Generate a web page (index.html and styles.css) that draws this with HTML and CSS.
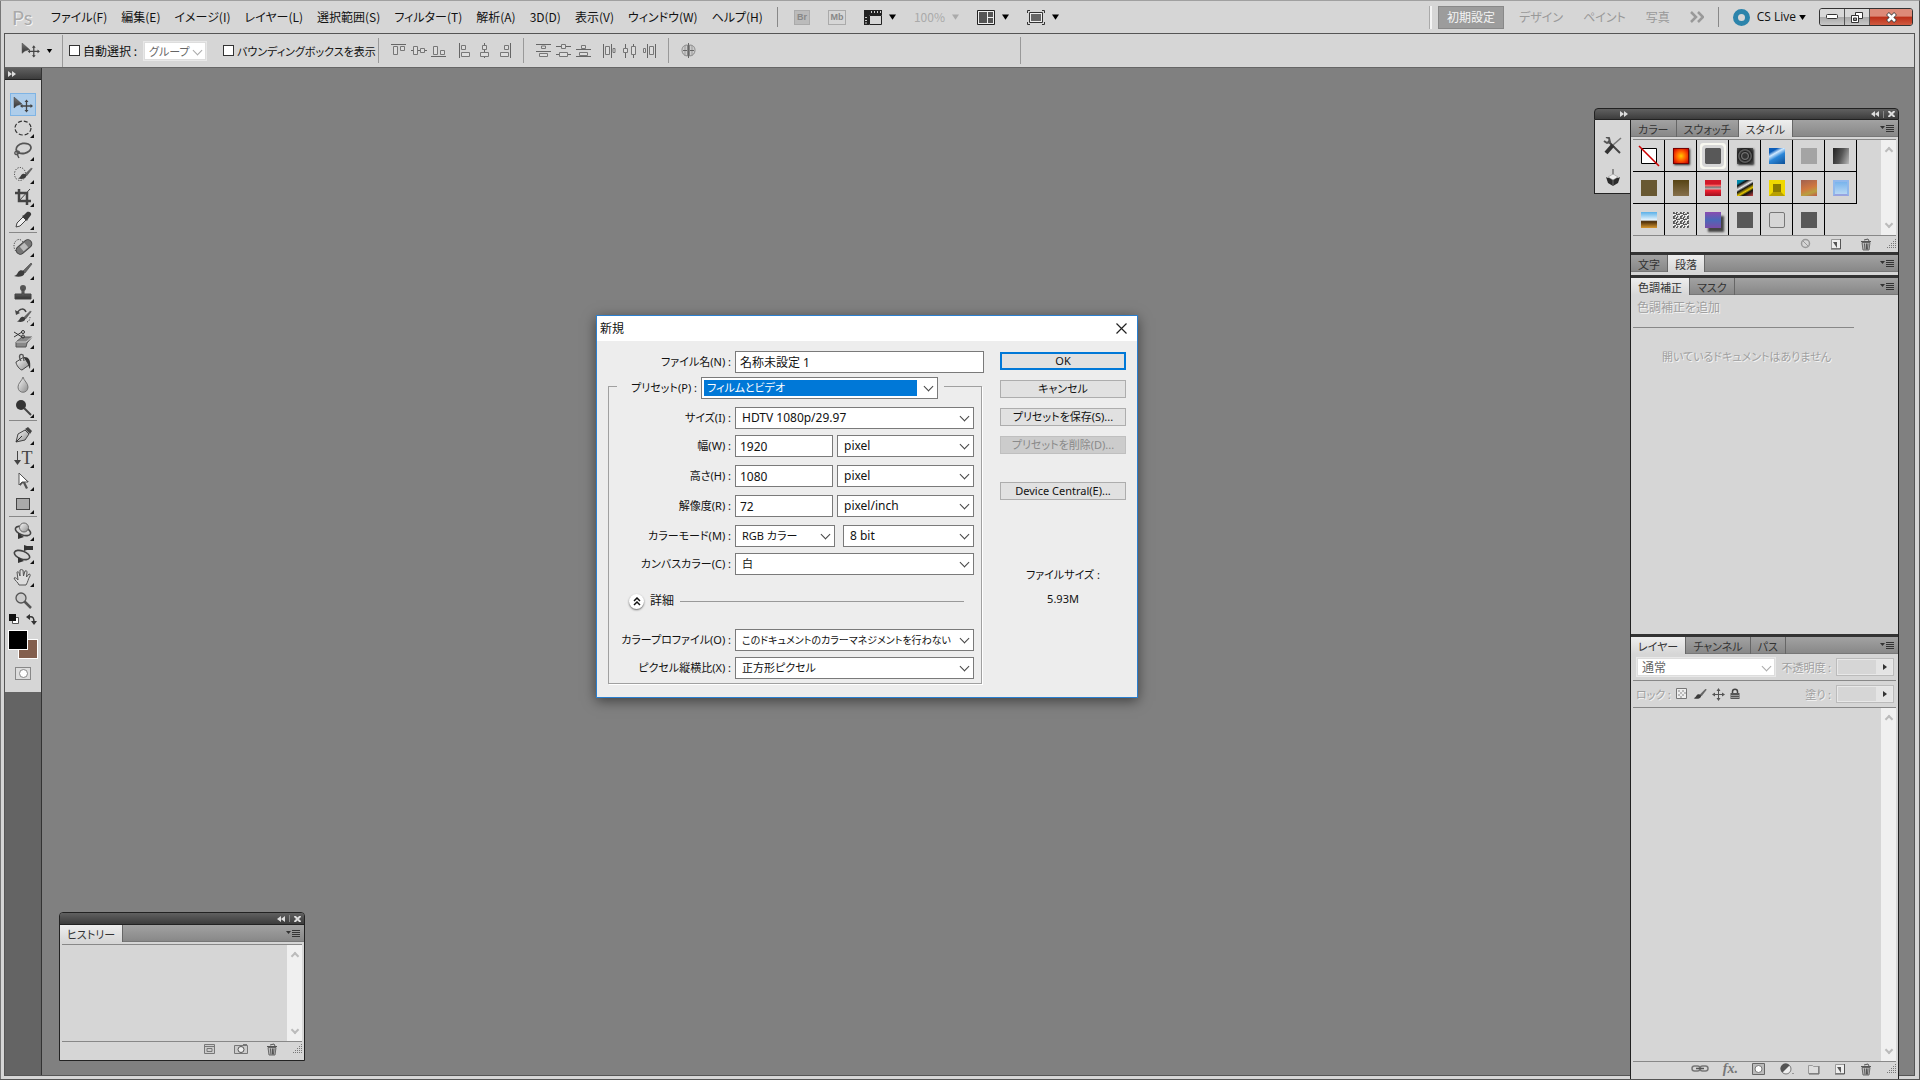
FILE: index.html
```html
<!DOCTYPE html>
<html lang="ja">
<head>
  <meta charset="UTF-8">
  <meta name="viewport" content="width=device-width, initial-scale=1.0">
  <title>Ps</title>
  <link rel="stylesheet" href="styles.css">
</head>
<body>

<!-- shared icons -->
<svg class="sprite" width="0" height="0">
  <defs>
    <linearGradient id="g-dark" x1="0" y1="0" x2="0" y2="1"><stop offset="0" stop-color="#777"/><stop offset="1" stop-color="#333"/></linearGradient>
    <linearGradient id="g-light" x1="0" y1="0" x2="1" y2="1"><stop offset="0" stop-color="#fafafa"/><stop offset="1" stop-color="#8c8c8c"/></linearGradient>
  </defs>
  <symbol id="i-menu" viewBox="0 0 14 9"><path d="M0 2h5L2.500 5z" fill="#333"/><path d="M6 1.500h8M6 3.500h8M6 5.500h8M6 7.500h8" stroke="#333"/></symbol>
  <symbol id="i-trash" viewBox="0 0 12 13"><path d="M2 4.500h8L9 12H3z" fill="#bbb" stroke="#666"/><path d="M4.500 5.500l.5 6M6.500 5.500v6M8 5.500l-.5 6M1 3.500h10M4 2l4-1 1 2" stroke="#555" fill="none"/></symbol>
  <symbol id="i-new" viewBox="0 0 12 12"><path d="M1.500 1.500h9v9h-9z" fill="#eee" stroke="#999"/><path d="M10.500 1v10H1" stroke="#555" fill="none"/><path d="M3 4h4v6z" fill="#555"/></symbol>
  <symbol id="i-grip" viewBox="0 0 10 10"><path d="M9.500 0v10M7.500 2v8M5.500 4v6M3.500 6v4M1.500 8v2" stroke="#777" stroke-dasharray="1 1"/></symbol>
  <symbol id="i-move" viewBox="0 0 20 16"><path d="M1 0v11l3-2.500L9 7z" fill="url(#g-dark)" stroke="#444" stroke-width=".5"/><path d="M13.500 4v10M8.500 9h10" stroke="#444" stroke-width="1.300"/><path d="M13.500 2.500l2 2.500h-4zM13.500 15.500l2-2.500h-4zM7 9l2.500-2v4zM20 9l-2.500-2v4z" fill="#444"/></symbol>
  <symbol id="i-brush" viewBox="0 0 20 16"><path d="M10 9l8-8 1 1-7 9z" fill="#666" stroke="#444" stroke-width=".6"/><path d="M1 14c4-1 3-4 6-5.500 2-.8 5 .5 4.500 3C10.500 15 5 15.500 1 14z" fill="#3c3c3c"/></symbol>
  <symbol id="i-down" viewBox="0 0 8 6"><path d="M0 0h8L4 6z"/></symbol>
  <symbol id="i-back" viewBox="0 0 8 6"><path d="M4 0v6L0 3zM8 0v6L4 3z" fill="#ddd"/></symbol>
  <symbol id="i-x" viewBox="0 0 7 6"><path d="M.5 0l6 6M6.500 0l-6 6" stroke="#ddd" stroke-width="2"/></symbol>
</svg>

<div class="app">
  <header class="menubar">
    <span class="logo">Ps</span>
    <nav class="menus">
      <button>ファイル(F)</button>
      <button>編集(E)</button>
      <button>イメージ(I)</button>
      <button>レイヤー(L)</button>
      <button>選択範囲(S)</button>
      <button>フィルター(T)</button>
      <button>解析(A)</button>
      <button>3D(D)</button>
      <button>表示(V)</button>
      <button>ウィンドウ(W)</button>
      <button>ヘルプ(H)</button>
    </nav>
    <div class="appbar">
      <button class="badge">Br</button>
      <button class="badge folder">Mb</button>
      <button class="drop">
        <svg width="18" height="15"><path d="M0 0h18v5H5v10H0z" fill="#222"/><path d="M5.500 5.500h12v9h-12z" fill="#d6d6d6" stroke="#222"/><path d="M7.500 1v2M10.500 1v2M13.500 1v2M16.500 1v2M1 7.500h2M1 10.500h2M1 13h2" stroke="#ccc"/></svg>
        <svg width="7" height="6"><use href="#i-down"/></svg>
      </button>
      <button class="drop off">100% <svg width="7" height="6"><use href="#i-down"/></svg></button>
      <button class="drop">
        <svg width="18" height="15"><path d="M.5.5h17v14H.5z" fill="#eee" stroke="#222"/><path d="M2 2h8v11H2zM11 2h5v5h-5zM11 8h5v5h-5z" fill="#555"/></svg>
        <svg width="7" height="6"><use href="#i-down"/></svg>
      </button>
      <button class="drop">
        <svg width="18" height="15"><path d="M.5 3V.5H3M15 .5h2.500V3M17.500 12v2.500H15M3 14.500H.5V12" fill="none" stroke="#333"/><path d="M2.500 2.500h13v10h-13z" fill="#eee" stroke="#333"/><path d="M4 4h10v7H4z" fill="#666"/></svg>
        <svg width="7" height="6"><use href="#i-down"/></svg>
      </button>
    </div>
    <div class="workspaces">
      <button class="current">初期設定</button>
      <button>デザイン</button>
      <button>ペイント</button>
      <button>写真</button>
      <button aria-label="その他"><svg width="14" height="12"><path d="M1 1l5 5-5 5M8 1l5 5-5 5" fill="none" stroke="#999" stroke-width="2.500"/></svg></button>
    </div>
    <button class="cslive"><i class="ring"></i>CS Live<svg width="7" height="5"><use href="#i-down"/></svg></button>
    <div class="winbtns">
      <button aria-label="最小化"><svg width="12" height="6"><rect x=".5" y=".5" width="11" height="4" rx="1" fill="#fff" stroke="#333"/></svg></button>
      <button aria-label="元に戻す"><svg width="12" height="11"><path d="M4.500.5h7v6h-7z" fill="#fff" stroke="#333"/><path d="M.5 3.500h7v7h-7z" fill="#fff" stroke="#333"/><path d="M2.500 6h3v2.500h-3z" fill="#999" stroke="#333"/></svg></button>
      <button class="close" aria-label="閉じる"><svg width="13" height="11"><path d="M2.500 1.500l8 8M10.500 1.500l-8 8" stroke="#444" stroke-width="4"/><path d="M3 2l7 7M10 2L3 9" stroke="#fff" stroke-width="2.500"/></svg></button>
    </div>
  </header>

  <div class="frame">
    <div class="options">
      <i class="vgrip"></i>
      <button class="tool-pick" aria-label="移動ツール"><svg width="19" height="15"><use href="#i-move"/></svg><svg width="7" height="4"><use href="#i-down"/></svg></button>
      <label class="check first"><input type="checkbox">自動選択 :</label>
      <span class="select faded group"><select aria-label="自動選択"><option>グループ</option></select></span>
      <label class="check bounds"><input type="checkbox">バウンディングボックスを表示</label>
      <div class="aligns ruled">
        <svg width="16" height="16"><path d="M0 1.500h15" stroke="#666"/><path d="M2.500 3.500h4v8h-4zM9.500 3.500h4v4h-4z" fill="#ddd" stroke="#777"/></svg>
        <svg width="16" height="16"><path d="M0 7.500h16" stroke="#666"/><path d="M2.500 3.500h4v8h-4zM9.500 5.500h4v4h-4z" fill="#ddd" stroke="#777"/></svg>
        <svg width="16" height="16"><path d="M0 13.500h15" stroke="#666"/><path d="M2.500 3.500h4v8h-4zM9.500 7.500h4v4h-4z" fill="#ddd" stroke="#777"/></svg>
      </div>
      <div class="aligns">
        <svg width="16" height="16"><path d="M2.500 0v15" stroke="#666"/><path d="M4.500 2.500h4v4h-4zM4.500 9.500h8v4h-8z" fill="#ddd" stroke="#777"/></svg>
        <svg width="16" height="16"><path d="M7.500 0v15" stroke="#666"/><path d="M5.500 2.500h4v4h-4zM3.500 9.500h8v4h-8z" fill="#ddd" stroke="#777"/></svg>
        <svg width="16" height="16"><path d="M13.500 0v15" stroke="#666"/><path d="M7.500 2.500h4v4h-4zM3.500 9.500h8v4h-8z" fill="#ddd" stroke="#777"/></svg>
      </div>
      <div class="aligns ruled">
        <svg width="16" height="16"><path d="M0 1.500h15M0 8.500h15" stroke="#666"/><path d="M5.500 3h4v2.500h-4zM3.500 10.500h8v3h-8z" fill="#ddd" stroke="#777"/></svg>
        <svg width="16" height="16"><path d="M0 3.500h15M0 11.500h15" stroke="#666"/><path d="M5.500 1.500h4v4h-4zM3.500 9.500h8v4h-8z" fill="#ddd" stroke="#777"/></svg>
        <svg width="16" height="16"><path d="M0 6.500h15M0 13.500h15" stroke="#666"/><path d="M5.500 2.500h4v3h-4zM3.500 9.500h8v3h-8z" fill="#ddd" stroke="#777"/></svg>
      </div>
      <div class="aligns">
        <svg width="16" height="16"><path d="M1.500 1v14M9.500 1v14" stroke="#666"/><path d="M3.500 3.500h4v8h-4zM11 5.500h2v4h-2z" fill="#ddd" stroke="#777"/></svg>
        <svg width="16" height="16"><path d="M3.500 1v14M11.500 1v14" stroke="#666"/><path d="M1.500 5.500h4v4h-4zM9.500 3.500h4v8h-4z" fill="#ddd" stroke="#777"/></svg>
        <svg width="16" height="16"><path d="M5.500 1v14M13.500 1v14" stroke="#666"/><path d="M1.500 5.500h2v4h-2zM7.500 3.500h4v8h-4z" fill="#ddd" stroke="#777"/></svg>
      </div>
      <div class="aligns ruled">
        <svg width="16" height="16"><path d="M6.500 2C2 2 1 5 1 7.500S3 13 6.500 13zM8.500 2C13 2 14 5 14 7.500S12 13 8.500 13z" fill="#ccc" stroke="#888"/><path d="M4 2v11M11 2v11" stroke="#999"/><path d="M7.500 0v15M2 7.500h4M9 7.500h4" stroke="#666"/></svg>
      </div>
      <i class="rest"></i>
    </div>

    <div class="stage">
      <aside class="tools">
        <div class="bar"><svg width="8" height="6"><path d="M0 0l4 3-4 3zM4 0l4 3-4 3z" fill="#ddd"/></svg></div>
        <div class="toolbox">
          <i class="hgrip"></i>
          <button class="tool on" aria-label="移動"><svg width="20" height="16"><use href="#i-move"/></svg></button>
          <button class="tool" aria-label="楕円形選択"><svg width="20" height="18"><ellipse cx="10" cy="9" rx="8" ry="7" fill="none" stroke="#333" stroke-width="1.200" stroke-dasharray="4 2"/></svg></button>
          <button class="tool" aria-label="なげなわ"><svg width="20" height="18"><ellipse cx="10.500" cy="6.500" rx="7.500" ry="5" transform="rotate(-10 10 6)" fill="none" stroke="#555" stroke-width="1.800"/><path d="M4 9c-4 1-2 5 1 3s0-4-1-2c0 3 1 4 2 6" fill="none" stroke="#555" stroke-width="1.300"/></svg></button>
          <button class="tool" aria-label="クイック選択"><svg width="20" height="18"><ellipse cx="7" cy="9" rx="5.500" ry="6.500" fill="none" stroke="#222" stroke-dasharray="1 1.500"/><use href="#i-brush" x="4" y="2" width="16" height="13"/></svg></button>
          <button class="tool" aria-label="切り抜き"><svg width="20" height="18"><path d="M6 1v12h12M2 5h12v12" fill="none" stroke="#444" stroke-width="2.500"/><path d="M6 13L17 1" stroke="#444"/></svg></button>
          <button class="tool" aria-label="スポイト"><svg width="20" height="18"><path d="M3 16l1-4 6-6 3 3-6 6z" fill="#eee" stroke="#444"/><path d="M9 5l5 5 1-2 3-4c1-2-2-4-4-3l-3 3z" fill="#3a3a3a"/></svg></button>
          <hr>
          <button class="tool" aria-label="修復ブラシ"><svg width="20" height="18"><ellipse cx="6" cy="8" rx="5" ry="6.500" fill="none" stroke="#222" stroke-dasharray="1 1.500"/><rect x="2" y="5" width="18" height="8" rx="4" transform="rotate(-40 11 9)" fill="#777" stroke="#444"/><rect x="8" y="6" width="6" height="6" transform="rotate(-40 11 9)" fill="#bbb"/></svg></button>
          <button class="tool" aria-label="ブラシ"><svg width="20" height="16"><use href="#i-brush"/></svg></button>
          <button class="tool" aria-label="コピースタンプ"><svg width="20" height="18"><circle cx="10" cy="4" r="3" fill="#555"/><path d="M9 6h2v4h7v5H2v-5h7z" fill="url(#g-dark)" stroke="#444"/></svg></button>
          <button class="tool" aria-label="ヒストリーブラシ"><svg width="20" height="18"><path d="M4 6c3-5 7-5 9-1" fill="none" stroke="#444" stroke-width="1.500"/><path d="M2 3l1 5 4-2z" fill="#444"/><use href="#i-brush" x="3" y="3" width="16" height="13"/><path d="M14 15c3-1 3-4 3-6" fill="none" stroke="#333" stroke-dasharray="1 1.500"/></svg></button>
          <button class="tool" aria-label="消しゴム"><svg width="20" height="18"><path d="M3 12l6-5h10l-5 6-1 4H3z" fill="#888" stroke="#555"/><path d="M3 12h10l6-5" fill="none" stroke="#ccc"/><path d="M1 2l8 5M1 7l8-5" stroke="#333"/><circle cx="10" cy="2" r="1.500" fill="none" stroke="#333"/><circle cx="10" cy="6.500" r="1.500" fill="none" stroke="#333"/></svg></button>
          <button class="tool" aria-label="塗りつぶし"><svg width="20" height="18"><path d="M3 9l8-5 5 8-7 5c-2 0-6-5-6-8z" fill="url(#g-light)" stroke="#444"/><path d="M8 8C5 3 7 0 10 2l1 6" fill="none" stroke="#555" stroke-width="1.300"/><path d="M11 4c5 0 7 3 6 12-2-2-1-5-3-7z" fill="#333"/></svg></button>
          <button class="tool" aria-label="ぼかし"><svg width="20" height="18"><path d="M10 1c1 4 5 6 5 10 0 7-10 7-10 0 0-4 4-6 5-10z" fill="url(#g-light)" stroke="#777"/></svg></button>
          <button class="tool" aria-label="覆い焼き"><svg width="20" height="18"><circle cx="8" cy="6" r="5" fill="#333"/><path d="M11 9l7 7" stroke="#444" stroke-width="2"/></svg></button>
          <hr>
          <button class="tool" aria-label="ペン"><svg width="20" height="18"><path d="M3 16L5 8l7-4 4 4-4 6z" fill="url(#g-light)" stroke="#444"/><path d="M3 16l6-6" stroke="#333"/><path d="M12 3l3-2 4 4-2 3z" fill="#444"/></svg></button>
          <button class="tool type" aria-label="文字"><svg width="8" height="14"><path d="M3.500 0v11" stroke="#444"/><path d="M0 9h7l-3.500 5z" fill="#444"/></svg>T</button>
          <button class="tool" aria-label="パス選択"><svg width="20" height="18"><path d="M7 2v12l3-3 3 6 2-1-3-6h4z" fill="#555"/><path d="M6 1v12l3-3h6z" fill="#fff" stroke="#555"/></svg></button>
          <button class="tool" aria-label="長方形"><svg width="20" height="18"><rect x="3.500" y="3.500" width="13" height="11" fill="#aaa" stroke="#444"/></svg></button>
          <hr>
          <button class="tool" aria-label="3D 回転"><svg width="20" height="18"><ellipse cx="10" cy="9" rx="8" ry="4" transform="rotate(20 10 9)" fill="none" stroke="#444" stroke-width="1.600"/><circle cx="11" cy="5.500" r="4.500" fill="url(#g-light)" stroke="#666"/><path d="M5 11l6 4-6 2z" fill="#333"/></svg></button>
          <button class="tool" aria-label="3D カメラ"><svg width="20" height="18"><ellipse cx="9" cy="10" rx="8" ry="4" transform="rotate(20 9 10)" fill="none" stroke="#444" stroke-width="1.600"/><path d="M11 0l3 1h6v4h-6l-3 1z" fill="#333"/><path d="M5 12l6 4-6 2z" fill="#333"/></svg></button>
          <button class="tool" aria-label="手のひら"><svg width="20" height="18"><path d="M6 17c-1-3-4-4-5-7 2-1 3 1 4 2L4 4c2-1 2 1 3 4V2c2-1 2 0 3 0l.5 6L12 3c2-1 2 1 2 1l-.5 5 2.500-3c2 0 1 2 1 2-2 3-2 6-4 9z" fill="#ddd" stroke="#555"/></svg></button>
          <button class="tool last" aria-label="ズーム"><svg width="20" height="18"><circle cx="8" cy="7" r="5" fill="#ccc" stroke="#555" stroke-width="1.300"/><path d="M11.500 10.500L18 17" stroke="#555" stroke-width="2.500"/></svg></button>
          <div class="swap">
            <svg width="11" height="11"><path d="M3.500 3.500h6v6h-6z" fill="#fff" stroke="#555"/><path d="M0 0h7v7H0z" fill="#111"/></svg>
            <svg width="11" height="11"><path d="M3 3c4-1 5 1 5 5" fill="none" stroke="#333" stroke-width="1.500"/><path d="M0 3l4-3v6zM8 11L5 7h6z" fill="#333"/></svg>
          </div>
          <div class="colors"><button class="bg" aria-label="背景色"></button><button class="fg" aria-label="描画色"></button></div>
          <button class="mask" aria-label="クイックマスク"><i></i></button>
        </div>
      </aside>
    </div>
  </div>

  <!-- right dock -->
  <section class="dock">
    <div class="bar">
      <svg class="expand" width="8" height="6"><path d="M0 0l4 3-4 3zM4 0l4 3-4 3z" fill="#ddd"/></svg>
      <svg width="8" height="6"><use href="#i-back"/></svg><i></i><svg width="7" height="6"><use href="#i-x"/></svg>
    </div>
    <div class="dock-cols">
      <div class="strip">
        <i class="hgrip"></i>
        <svg width="20" height="18"><path d="M5 4l12 12" stroke="#444" stroke-width="2"/><path d="M1 4l3 2 3-1-1-4-3-1" fill="none" stroke="#555" stroke-width="2"/><path d="M18 1l-8 7" stroke="#777" stroke-width="1.500"/><path d="M10 8l-7 8" stroke="#333" stroke-width="4"/></svg>
        <svg width="20" height="18"><path d="M10 0v7" stroke="#444"/><path d="M3 8l2 1 5-3 5 3 2-1-2 6-5 3-5-3z" fill="#2c2c2c"/><path d="M10 5l5 3-5 3-5-3z" fill="#eee" stroke="#888" stroke-width=".5"/><path d="M10 11v6" stroke="#888" stroke-width=".7"/></svg>
      </div>
      <div class="panels">
        <div class="panel">
          <div class="tabs"><button>カラー</button><button>スウォッチ</button><button class="active">スタイル</button><svg width="14" height="9"><use href="#i-menu"/></svg></div>
          <div class="list">
            <div class="styles">
              <button class="s-none" aria-label="なし"><svg width="22" height="22"><path d="M3.500 3.500h15v15h-15z" fill="#fff" stroke="#000"/><path d="M1 1l20 20" stroke="#c00" stroke-width="1.600"/></svg></button>
              <button><i class="s-fire"></i></button>
              <button class="picked"><i></i></button>
              <button><i class="s-rings"></i></button>
              <button><i class="s-blue"></i></button>
              <button><i class="s-gray"></i></button>
              <button><i class="s-smoke"></i></button>
              <button><i class="s-brown"></i></button>
              <button><i class="s-brown2"></i></button>
              <button><i class="s-red"></i></button>
              <button><i class="s-zebra"></i></button>
              <button><i class="s-yellow"></i></button>
              <button><i class="s-dusk"></i></button>
              <button><i class="s-sky"></i></button>
              <button><i class="s-land"></i></button>
              <button><i class="s-noise"></i></button>
              <button><i class="s-violet"></i></button>
              <button><i></i></button>
              <button><i class="s-line"></i></button>
              <button><i></i></button>
            </div>
            <div class="scroll"><i class="up"></i><i class="down"></i></div>
          </div>
          <div class="foot">
            <svg width="12" height="12"><circle cx="5.500" cy="5.500" r="4" fill="none" stroke="#999" stroke-width="1.500"/><path d="M3 3l5 5" stroke="#999"/></svg>
            <svg width="12" height="12"><use href="#i-new"/></svg>
            <svg width="12" height="13"><use href="#i-trash"/></svg>
            <svg class="grip" width="10" height="10"><use href="#i-grip"/></svg>
          </div>
        </div>
        <div class="panel short">
          <div class="tabs"><button>文字</button><button class="active">段落</button><svg width="14" height="9"><use href="#i-menu"/></svg></div>
        </div>
        <div class="panel adjust">
          <div class="tabs"><button class="active">色調補正</button><button>マスク</button><svg width="14" height="9"><use href="#i-menu"/></svg></div>
          <p class="etched add">色調補正を追加</p>
          <p class="etched none">開いているドキュメントはありません</p>
        </div>
        <div class="panel layers">
          <div class="tabs"><button class="active">レイヤー</button><button>チャンネル</button><button>パス</button><svg width="14" height="9"><use href="#i-menu"/></svg></div>
          <div class="row">
            <span class="select faded mode"><select aria-label="描画モード"><option>通常</option></select></span>
            <label class="etched" for="opacity">不透明度 :</label>
            <span class="stepper"><input type="text" id="opacity"><button aria-label="不透明度を変更"></button></span>
          </div>
          <div class="row">
            <span class="etched">ロック :</span>
            <svg width="12" height="12"><path d="M.5.5h10v10H.5z" fill="#eee" stroke="#777"/><path d="M2 2h2v2H2zM6 2h2v2H6zM4 4h2v2H4zM2 6h2v2H2zM8 4h2v2H8zM6 6h2v2H6zM4 8h2v2H4z" fill="#bbb"/></svg>
            <svg width="14" height="12"><use href="#i-brush"/></svg>
            <svg width="13" height="13"><path d="M6.500 2v9M2 6.500h9" stroke="#555"/><path d="M6.500 0l2 3h-4zM6.500 13l2-3h-4zM0 6.500l3-2v4zM13 6.500l-3-2v4z" fill="#555"/></svg>
            <svg width="10" height="12"><path d="M2.500 6V3.500c0-3 5-3 5 0V6" fill="none" stroke="#444" stroke-width="1.500"/><path d="M.5 5h9v6h-9z" fill="#555"/><path d="M1 7.500h8M1 9.500h8" stroke="#999"/></svg>
            <label class="etched push" for="fill">塗り :</label>
            <span class="stepper"><input type="text" id="fill"><button aria-label="塗りを変更"></button></span>
          </div>
          <div class="list"><div class="blank"></div><div class="scroll"><i class="up"></i><i class="down"></i></div></div>
          <div class="foot">
            <svg width="18" height="10"><rect x="1" y="2" width="8" height="5" rx="2.500" fill="none" stroke="#777" stroke-width="1.500"/><rect x="9" y="2" width="8" height="5" rx="2.500" fill="none" stroke="#777" stroke-width="1.500"/><path d="M5 4.500h8" stroke="#555" stroke-width="1.500"/></svg>
            <span class="fx">fx.</span>
            <svg width="14" height="12"><path d="M.5.5h12v11H.5z" fill="#bbb" stroke="#666"/><circle cx="6.500" cy="6" r="3.500" fill="#fff" stroke="#777"/></svg>
            <svg width="14" height="12"><circle cx="6" cy="6" r="5" fill="#eee" stroke="#777"/><path d="M2.500 9.500a5 5 0 1 1 7-7z" fill="#555"/><path d="M12 10h2l-1 1z" fill="#555"/></svg>
            <svg width="12" height="12"><path d="M.5 2.500h4l1 1h5v7H.5z" fill="#ddd" stroke="#999"/><path d="M11 3v8H1" stroke="#666" fill="none"/></svg>
            <svg width="12" height="12"><use href="#i-new"/></svg>
            <svg width="12" height="13"><use href="#i-trash"/></svg>
            <svg class="grip" width="10" height="10"><use href="#i-grip"/></svg>
          </div>
        </div>
      </div>
    </div>
  </section>

  <!-- floating history panel -->
  <section class="history">
    <div class="bar"><svg width="8" height="6"><use href="#i-back"/></svg><i></i><svg width="7" height="6"><use href="#i-x"/></svg></div>
    <div class="panel">
      <div class="tabs"><button class="active">ヒストリー</button><svg width="14" height="9"><use href="#i-menu"/></svg></div>
      <div class="list"><div class="blank"></div><div class="scroll"><i class="up"></i><i class="down"></i></div></div>
      <div class="foot">
        <svg width="12" height="12"><path d="M.5 1.500h10v9H.5z" fill="#ccc" stroke="#777"/><path d="M1 3.500h9M3 5.500h5v3H3z" stroke="#777" fill="none"/></svg>
        <svg width="14" height="12"><path d="M.5 2.500h13v8H.5z" fill="#ccc" stroke="#777"/><circle cx="7" cy="6.500" r="3" fill="#eee" stroke="#555"/><path d="M9 1.500h4" stroke="#777"/></svg>
        <svg width="12" height="13"><use href="#i-trash"/></svg>
        <svg class="grip" width="10" height="10"><use href="#i-grip"/></svg>
      </div>
    </div>
  </section>

  <!-- new document dialog -->
  <form class="dialog">
    <div class="title">新規<button type="button" aria-label="閉じる"><svg width="11" height="11"><path d="M.5.5l10 10M10.500.5l-10 10" stroke="#222" stroke-width="1.200"/></svg></button></div>
    <div class="content">
      <div class="fields">
        <div class="line name"><label for="name">ファイル名(N) :</label><input type="text" id="name" value="名称未設定 1"></div>
        <fieldset>
          <legend><label for="preset">プリセット(P) :</label><span class="select preset"><select id="preset"><option>フィルムとビデオ</option></select></span></legend>
          <div class="line"><label for="size">サイズ(I) :</label><span class="select value"><select id="size"><option>HDTV 1080p/29.97</option></select></span></div>
          <div class="line tall"><label for="width">幅(W) :</label><input type="text" id="width" value="1920"><span class="select value"><select aria-label="幅の単位"><option>pixel</option></select></span></div>
          <div class="line tall"><label for="height">高さ(H) :</label><input type="text" id="height" value="1080"><span class="select value"><select aria-label="高さの単位"><option>pixel</option></select></span></div>
          <div class="line tall"><label for="res">解像度(R) :</label><input type="text" id="res" value="72"><span class="select value"><select aria-label="解像度の単位"><option>pixel/inch</option></select></span></div>
          <div class="line"><label for="mode">カラーモード(M) :</label><span class="select"><select id="mode"><option>RGB カラー</option></select></span><span class="select value depth"><select aria-label="ビット数"><option>8 bit</option></select></span></div>
          <div class="line"><label for="canvas">カンバスカラー(C) :</label><span class="select"><select id="canvas"><option>白</option></select></span></div>
          <div class="more"><button type="button" aria-label="詳細を閉じる"><svg width="8" height="9"><path d="M1 4l3-3 3 3M1 8l3-3 3 3" fill="none" stroke="#111" stroke-width="1.500"/></svg></button>詳細</div>
          <div class="line"><label for="profile">カラープロファイル(O) :</label><span class="select long"><select id="profile"><option>このドキュメントのカラーマネジメントを行わない</option></select></span></div>
          <div class="line"><label for="aspect">ピクセル縦横比(X) :</label><span class="select"><select id="aspect"><option>正方形ピクセル</option></select></span></div>
        </fieldset>
      </div>
      <div class="actions">
        <button type="button" class="default">OK</button>
        <button type="button">キャンセル</button>
        <button type="button">プリセットを保存(S)...</button>
        <button type="button" disabled>プリセットを削除(D)...</button>
        <button type="button" class="device">Device Central(E)...</button>
        <p>ファイルサイズ :</p>
        <p>5.93M</p>
      </div>
    </div>
  </form>
</div>

</body>
</html>
```

FILE: styles.css
```css
* {
  box-sizing: border-box;
}
body {
  margin: 0;
  background: #d6d6d6;
  color: #111;
  font-family: "Noto Sans CJK JP", sans-serif;
  font-size: 12px;
  line-height: 16px;
  font-feature-settings: "palt";
}
button, input, select {
  font: inherit;
  font-feature-settings: inherit;
  color: inherit;
  margin: 0;
  padding: 0;
  border: none;
  border-radius: 0;
  background: none;
}
button {
  white-space: nowrap;
}
svg {
  display: block;
  flex: none;
}
p {
  margin: 0;
}
.sprite {
  position: absolute;
}
.app {
  position: relative;
  display: flex;
  flex-direction: column;
  height: 100vh;
  overflow: hidden;
  padding: 0 4px 3px;
  border-top: 1px solid #a0a0a0;
  border-right: 1px solid #555;
  border-bottom: 1px solid #555;
  box-shadow: inset 1px 0 #777;
}

/* menu bar */
.menubar {
  display: flex;
  align-items: center;
  height: 32px;
  padding: 0 2px 0 8px;
}
.logo {
  width: 39px;
  font-family: Lato, sans-serif;
  font-size: 20px;
  line-height: 24px;
  color: #aaa;
  text-shadow: 1px 1px #f4f4f4;
}
.menus {
  display: flex;
  gap: 14px;
}
.appbar {
  display: flex;
  align-items: center;
  gap: 18px;
  height: 20px;
  margin-left: 14px;
  padding-left: 16px;
  border-left: 1px solid #888;
}
.badge {
  width: 16px;
  height: 15px;
  border: 1px solid #aaa;
  background: #bbb;
  color: #888;
  font-family: "Liberation Sans", sans-serif;
  font-size: 9px;
  line-height: 13px;
  font-weight: bold;
}
.badge.folder {
  width: 18px;
  background: none;
}
.drop {
  display: flex;
  align-items: center;
  gap: 7px;
}
.drop.off {
  color: #aaa;
  fill: #aaa;
}
.workspaces {
  display: flex;
  align-items: center;
  gap: 20px;
  margin-left: auto;
  padding-left: 6px;
  padding-right: 14px;
  border-left: 2px solid #f4f4f4;
  box-shadow: -1px 0 #aaa;
  color: #999;
  text-shadow: 1px 1px #e8e8e8;
}
.workspaces .current {
  height: 23px;
  margin-right: -5px;
  padding: 0 8px;
  border: 1px solid #888;
  background: #9c9c9c;
  color: #f4f4f4;
  text-shadow: none;
}
.cslive {
  display: flex;
  align-items: center;
  gap: 3px;
  height: 20px;
  padding-left: 14px;
  border-left: 1px solid #888;
  font-family: "Open Sans", sans-serif;
}
.ring {
  width: 17px;
  height: 17px;
  margin-right: 4px;
  border: 5px solid #2c84ab;
  border-radius: 50%;
}
.winbtns {
  display: flex;
  margin-left: 13px;
  border: 1px solid #333;
  border-radius: 3px;
  overflow: hidden;
}
.winbtns button {
  display: flex;
  align-items: center;
  justify-content: center;
  width: 25px;
  height: 16px;
  border-right: 1px solid #555;
  background: linear-gradient(#d8d8d8 50%, #a8a8a8 50%, #c8c8c8);
}
.winbtns .close {
  width: 42px;
  border: none;
  background: linear-gradient(#dd8a78 45%, #bc2f18 50%, #d05a40);
}

/* frame and options bar */
.frame {
  flex: 1;
  display: flex;
  flex-direction: column;
  border: 1px solid #555;
  background: #808080;
}
.options {
  display: flex;
  align-items: center;
  height: 34px;
  padding-left: 4px;
  background: #d6d6d6;
  border-bottom: 1px solid #666;
}
.vgrip {
  width: 3px;
  height: 24px;
  background: radial-gradient(circle, #999 45%, transparent 50%) 0 0 / 2px 2px;
}
.hgrip {
  width: 27px;
  height: 4px;
  background: radial-gradient(circle, #999 45%, transparent 50%) 0 0 / 2px 2px;
}
.tool-pick {
  display: flex;
  align-items: center;
  gap: 6px;
  height: 32px;
  padding: 0 9px;
  border-right: 1px solid #999;
}
.check {
  display: flex;
  align-items: center;
  gap: 3px;
  white-space: nowrap;
}
.check.first {
  margin: 0 6px;
}
.check.bounds {
  width: 145px;
  margin-left: 16px;
  font-size: 11px;
}
.check input {
  flex: none;
  appearance: none;
  width: 11px;
  height: 11px;
  border: 1px solid #333;
  background: #fff;
}
.aligns {
  display: flex;
  align-items: center;
  gap: 4px;
  height: 25px;
  padding-left: 10px;
}
.aligns.ruled {
  margin-left: 10px;
  padding-left: 12px;
  border-left: 1px solid #999;
}
.rest {
  height: 27px;
  margin-left: 323px;
  border-left: 1px solid #999;
}
.stage {
  flex: 1;
  display: flex;
}

/* dark title bars */
.bar {
  display: flex;
  align-items: center;
  gap: 4px;
  height: 12px;
  padding: 0 3px;
  background: linear-gradient(#606060, #3c3c3c);
  border-bottom: 1px solid #222;
}
.bar i {
  height: 7px;
  border-left: 1px solid #888;
}

/* toolbox */
.tools {
  display: flex;
  flex-direction: column;
  width: 37px;
  background: #646464;
  border-right: 1px solid #333;
}
.toolbox {
  display: flex;
  flex-direction: column;
  align-items: center;
  padding: 4px 0 12px;
  background: #d6d6d6;
}
.toolbox .hgrip {
  margin-bottom: 5px;
}
.toolbox hr {
  width: 28px;
  margin: 1px 0 2px;
  border: none;
  border-top: 1px solid #888;
}
.tool {
  position: relative;
  display: flex;
  align-items: center;
  justify-content: center;
  width: 26px;
  height: 23px;
}
.tool.on {
  background: #aecdea;
  border: 1px solid #7fb4e4;
}
.tool::after {
  content: "";
  position: absolute;
  right: 2px;
  bottom: 1px;
  border: 2px solid #111;
  border-left-color: transparent;
  border-top-color: transparent;
}
.tool.on::after,
.tool.last::after {
  display: none;
}
.tool.type {
  font-family: "Liberation Serif", serif;
  font-size: 18px;
  color: #444;
}
.swap {
  display: flex;
  gap: 6px;
  margin: 3px 0 5px;
}
.colors {
  position: relative;
  width: 30px;
  height: 29px;
}
.colors button {
  position: absolute;
  width: 20px;
  height: 20px;
  border: 1px solid #fff;
}
.colors .fg {
  left: 0;
  top: 0;
  background: #000;
}
.colors .bg {
  right: 0;
  bottom: 0;
  background: #835f4e;
}
.mask {
  display: flex;
  align-items: center;
  justify-content: center;
  width: 16px;
  height: 13px;
  margin-top: 8px;
  border: 1px solid #888;
  background: #ddd;
}
.mask i {
  width: 9px;
  height: 9px;
  border: 1px solid #888;
  border-radius: 50%;
  background: #fff;
}

/* panels */
.panel {
  background: #d6d6d6;
}
.tabs {
  display: flex;
  align-items: stretch;
  height: 17px;
  padding-right: 4px;
  background: linear-gradient(#a2a2a2, #888);
  border-bottom: 1px solid #777;
  font-size: 11px;
}
.tabs button {
  height: 17px;
  padding: 0 7px;
  border-right: 1px solid #666;
  color: #333;
}
.tabs .active {
  background: linear-gradient(#eee, #d6d6d6);
}
.tabs svg {
  align-self: center;
  margin-left: auto;
}
.list {
  display: flex;
  height: 97px;
  margin: 2px 2px 0;
  border-top: 1px solid #888;
  border-bottom: 1px solid #888;
}
.blank {
  flex: 1;
}
.scroll {
  display: flex;
  flex-direction: column;
  justify-content: space-between;
  align-items: center;
  width: 15px;
  margin-left: auto;
  padding: 8px 0;
  background: #f0f0f0;
}
.scroll i {
  width: 6px;
  height: 6px;
  border: 2px solid #bbb;
  border-right: none;
  border-bottom: none;
  transform: rotate(45deg);
}
.scroll .down {
  transform: rotate(225deg);
}
.foot {
  display: flex;
  align-items: center;
  justify-content: flex-end;
  gap: 18px;
  height: 16px;
  padding-right: 2px;
}
.foot .grip {
  margin-left: -4px;
}
.fx {
  font: italic bold 14px/14px "Liberation Serif", serif;
  color: #777;
}
.etched {
  color: #a0a0a0;
  text-shadow: 1px 1px #f4f4f4;
}

/* right dock */
.dock {
  position: absolute;
  top: 107px;
  right: 20px;
  bottom: -1px;
  display: flex;
  flex-direction: column;
  width: 305px;
}
.dock > .bar {
  border: 1px solid #222;
  border-radius: 4px 4px 0 0;
}
.dock .expand {
  margin-left: 22px;
  margin-right: auto;
}
.dock-cols {
  flex: 1;
  display: flex;
  align-items: flex-start;
  min-height: 0;
}
.strip {
  display: flex;
  flex-direction: column;
  align-items: center;
  gap: 14px;
  width: 36px;
  padding: 4px 0 6px;
  background: #d6d6d6;
  border-left: 1px solid #222;
  border-bottom: 1px solid #222;
}
.strip .hgrip {
  margin-bottom: -5px;
}
.panels {
  flex: 1;
  display: flex;
  flex-direction: column;
  align-self: stretch;
  gap: 3px;
  background: #333;
  border-left: 1px solid #222;
  border-right: 1px solid #222;
}
.styles {
  display: grid;
  grid-template-columns: repeat(7, 32px);
  grid-auto-rows: 32px;
  overflow: hidden;
}
.styles button {
  display: flex;
  align-items: center;
  justify-content: center;
  border-right: 1px solid #000;
  border-bottom: 1px solid #000;
}
.styles button:last-child {
  border-bottom: none;
}
.styles i {
  width: 16px;
  height: 16px;
  background: #585858;
}
.styles .picked i {
  outline: 3px solid #d6d6d6;
  border-radius: 1px;
  box-shadow: 0 0 0 5px #f8f8f0;
}
.styles .s-fire {
  background: radial-gradient(#ffc800, #ff5a00 50%, #c00);
  border: 1px solid #700;
  box-shadow: 1px 1px 2px #222;
}
.styles .s-rings {
  background: radial-gradient(#333 20%, #777 30%, #222 40%, #666 55%, #222 65%, #555);
  box-shadow: 1px 1px 2px #222;
}
.styles .s-blue {
  background: linear-gradient(150deg, #0a5cb8 20%, #cfe8ff 35%, #2b86d8 55%, #0d4f96);
}
.styles .s-gray {
  background: #a4a4a4;
}
.styles .s-smoke {
  background: linear-gradient(110deg, #222, #555 50%, #bbb);
}
.styles .s-brown {
  background: #685832;
}
.styles .s-brown2 {
  background: linear-gradient(#574414, #86704c);
}
.styles .s-red {
  background: linear-gradient(#d01828 25%, #f66 35%, #777 45%, #c8b0b0 55%, #f02030 65%, #a01020);
}
.styles .s-zebra {
  background: linear-gradient(150deg, #08a 15%, #111 25%, #eee 40%, #111 50%, #e8c800 65%, #111 75%, #c44);
}
.styles .s-yellow {
  background: #8a7a00;
  border: 4px solid #f0d800;
  border-bottom-color: #b8a000;
}
.styles .s-dusk {
  background: linear-gradient(160deg, #a06050, #d07840 50%, #b8a040 75%, #c05848);
}
.styles .s-sky {
  background: linear-gradient(#78b4ec, #b8d8f4);
  border: 2px solid #90b8ec;
  border-bottom-color: #98a4e0;
}
.styles .s-land {
  background: linear-gradient(#5ab0e8, #e8f4fc 50%, #4a2c08 60%, #d89830);
}
.styles .s-noise {
  background: repeating-conic-gradient(#555 0 7%, #eee 9% 15%, #aaa 17% 20%) 0 0 / 7px 5px;
}
.styles .s-violet {
  background: linear-gradient(#8a4cb0, #4a68b8 50%, #7a4ca8);
  box-shadow: 3px 4px 2px #444;
}
.styles .s-line {
  background: none;
  border: 1px solid #777;
  border-radius: 2px;
}
.short {
  padding-bottom: 3px;
}
.adjust {
  height: 356px;
}
.adjust .add {
  margin: 3px 44px 0 2px;
  padding: 1px 4px 12px;
  border-bottom: 1px solid #888;
}
.adjust .none {
  margin-top: 20px;
  padding-right: 44px;
  padding-left: 8px;
  font-size: 11px;
  text-align: center;
}
.layers {
  flex: 1;
  display: flex;
  flex-direction: column;
  min-height: 0;
}
.layers .list {
  flex: 1;
  margin-top: 0;
  border-top: none;
}
.layers .foot,
.history .foot {
  height: 18px;
  padding-bottom: 4px;
}
.layers .foot {
  gap: 14px;
}
.layers .grip {
  margin-left: 0;
}
.row {
  display: flex;
  align-items: center;
  gap: 5px;
  height: 27px;
  margin: 0 2px;
  padding: 0 2px 0 3px;
  border-bottom: 1px solid #888;
  font-size: 11px;
}
.row .push {
  margin-left: auto;
}
.row .mode {
  flex: 1;
  font-size: 12px;
}
.stepper {
  display: flex;
  border: 1px solid #bbb;
  outline: 1px solid #e8e8e8;
  outline-offset: -2px;
}
.stepper input {
  width: 39px;
  height: 16px;
}
.stepper button {
  display: flex;
  align-items: center;
  justify-content: center;
  width: 17px;
  background: #e4e4e4;
}
.stepper button::before {
  content: "";
  border: 3px solid transparent;
  border-left: 4px solid #333;
  border-right: none;
}

/* selects */
.select {
  position: relative;
  display: flex;
  flex: 1;
}
.select select {
  appearance: none;
  width: 100%;
  height: 22px;
  padding: 0 20px 0 6px;
  border: 1px solid #7a7a7a;
  background: #fff;
}
.select::after {
  content: "";
  position: absolute;
  right: 6px;
  top: 6px;
  width: 6px;
  height: 6px;
  border-right: 1px solid #444;
  border-bottom: 1px solid #444;
  transform: rotate(45deg);
}
.select.faded select {
  height: 20px;
  padding-right: 14px;
  padding-left: 5px;
  border: 1px solid #e8e8e8;
  color: #666;
  box-shadow: inset 0 0 0 1px #ddd;
}
.select.faded::after {
  border-color: #aaa;
}
.select.group {
  flex: none;
  width: 64px;
  font-size: 11px;
}

/* history */
.history {
  position: absolute;
  left: 59px;
  bottom: 18px;
  width: 246px;
  border: 1px solid #222;
  border-radius: 4px 4px 0 0;
  overflow: hidden;
}
.history .bar,
.dock > .bar {
  justify-content: flex-end;
}
.history .list {
  height: 98px;
}

/* new document dialog */
.dialog {
  position: absolute;
  left: 596px;
  top: 314px;
  width: 542px;
  border: 1px solid #2a7fd0;
  background: #ededed;
  box-shadow: 0 3px 12px rgba(0, 0, 0, .5);
  font-family: "Noto Sans", "Noto Sans CJK JP", sans-serif;
  font-size: 11px;
}
.title {
  display: flex;
  align-items: center;
  justify-content: space-between;
  height: 25px;
  padding: 0 10px 0 3px;
  background: #fff;
  font-size: 12px;
}
.content {
  display: flex;
  gap: 16px;
  padding: 10px 11px 13px;
}
.fields {
  flex: 1;
}
.line {
  display: flex;
  align-items: center;
  gap: 4px;
  margin-bottom: 6px;
}
.line.tall {
  margin-bottom: 8px;
}
.line label {
  width: 122px;
  text-align: right;
  white-space: nowrap;
}
.line input {
  width: 98px;
  height: 22px;
  padding: 0 4px;
  border: 1px solid #7a7a7a;
  background: #fff;
  font-size: 12px;
}
.line.name {
  margin-bottom: 0;
  padding-left: 1px;
}
.line.name input {
  flex: 1;
}
.value {
  font-size: 12px;
}
.long {
  font-size: 10px;
}
.line .depth {
  flex: none;
  width: 131px;
  margin-left: 4px;
}
fieldset {
  margin: 0 2px 0 0;
  padding: 8px 7px 4px 0;
  border: 1px solid #a0a0a0;
  box-shadow: 1px 1px #fff;
}
fieldset .line:last-child {
  margin-bottom: 0;
}
legend {
  display: flex;
  align-items: center;
  gap: 4px;
  width: 327px;
  margin-left: 8px;
  padding: 4px 6px 0 0;
}
legend label {
  width: 80px;
  text-align: right;
  white-space: nowrap;
}
.preset select {
  padding: 0 22px 0 5px;
  background: linear-gradient(#0078d7, #0078d7) 2px 2px / 213px 16px no-repeat #fff;
  color: #fff;
}
.more {
  display: flex;
  align-items: center;
  gap: 6px;
  margin: 18px 10px 20px 20px;
  font-size: 12px;
}
.more button {
  display: flex;
  align-items: center;
  justify-content: center;
  width: 15px;
  height: 15px;
  border-radius: 50%;
  background: #fff;
  box-shadow: 0 1px 2px #666;
}
.more::after {
  content: "";
  flex: 1;
  border-top: 1px solid #999;
}
.actions {
  display: flex;
  flex-direction: column;
  gap: 10px;
  width: 126px;
  padding-top: 1px;
  text-align: center;
  line-height: 14px;
}
.actions button {
  height: 18px;
  border: 1px solid #adadad;
  background: #e1e1e1;
}
.actions .default {
  border: 2px solid #0078d7;
}
.actions button:disabled {
  border-color: #bfbfbf;
  background: #ccc;
  color: #8a8a8a;
}
.actions .device {
  margin: 18px 0 58px;
}
```
